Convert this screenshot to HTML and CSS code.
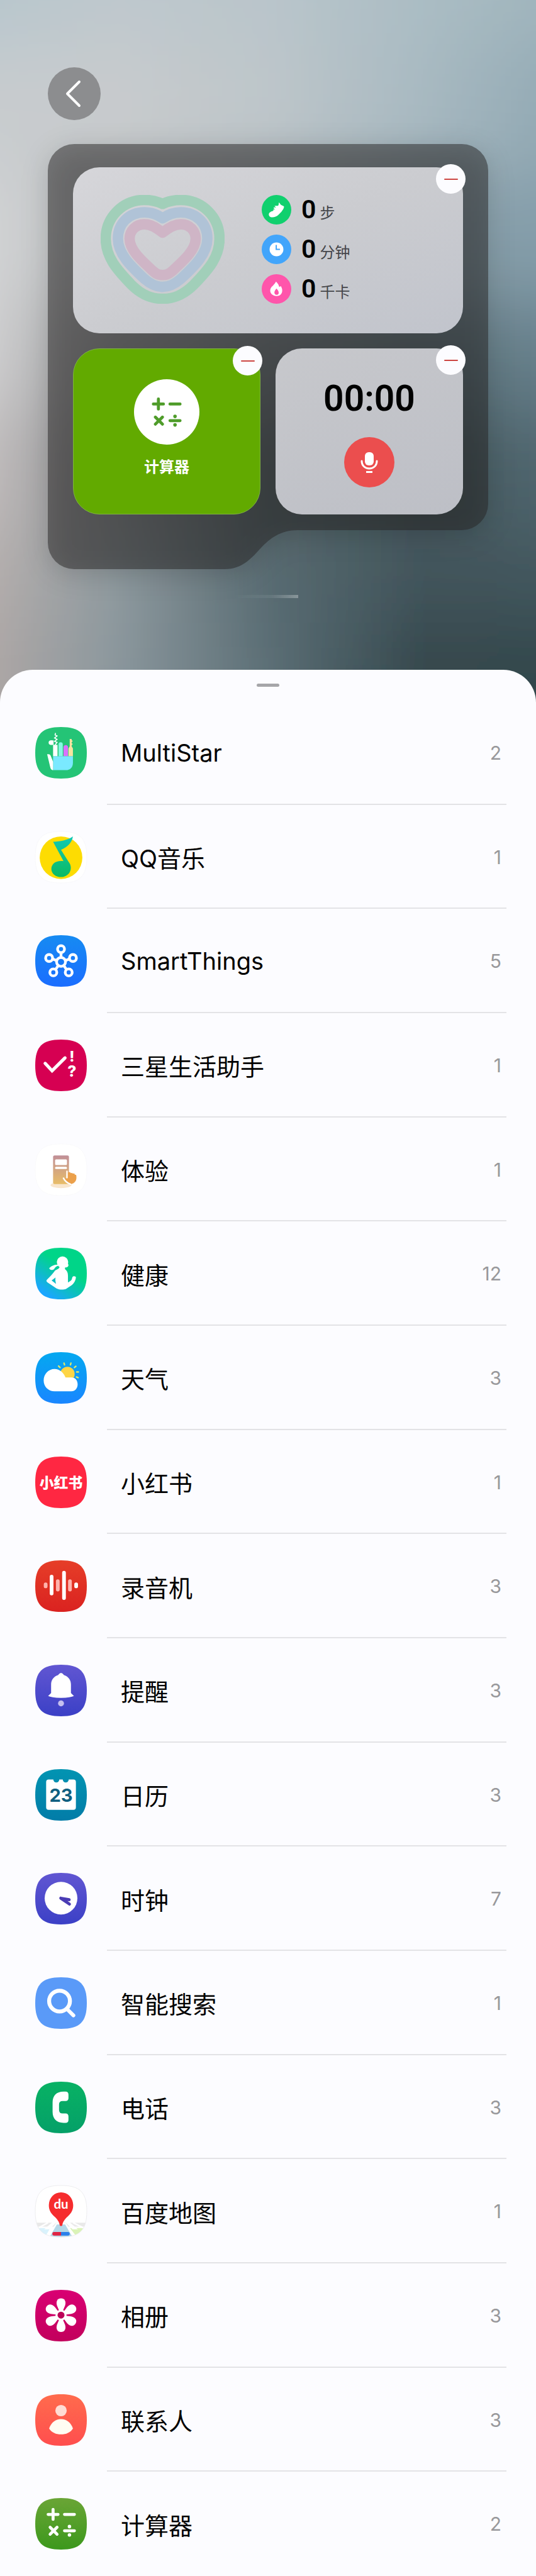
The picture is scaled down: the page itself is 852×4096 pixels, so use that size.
FILE: index.html
```html
<!DOCTYPE html>
<html lang="zh-CN">
<head>
<meta charset="utf-8">
<meta name="viewport" content="width=device-width, initial-scale=1">
<title>小组件</title>
<link rel="stylesheet" href="styles.css">
</head>
<body>
<svg class="defs" aria-hidden="true">
  <defs>
    <path id="tile" d="M52 0C90 0 104 14 104 52S90 104 52 104 0 90 0 52 14 0 52 0Z"/>
    <clipPath id="tile-clip"><use href="#tile"/></clipPath>
    <g id="calc-signs" fill="none" stroke-width="6" stroke-linecap="round">
      <path d="M26 33H46M36 23V43M59 33H79M30 59L44 73M44 59L30 73M59 66H79"/>
      <path d="M69 57.500V57.600M69 74.400V74.500" stroke-width="7"/>
    </g>
    <path id="petal" d="M52 51L44 32C41 23 45 17 52 17S63 23 60 32Z"/>
    <linearGradient id="g-blue" x2="0" y2="1"><stop stop-color="#168bf2"/><stop offset="1" stop-color="#1b6dff"/></linearGradient>
    <linearGradient id="g-note" x2="0" y2="1"><stop stop-color="#12c9b4"/><stop offset="1" stop-color="#0cba62"/></linearGradient>
    <linearGradient id="g-kiosk" x2="0" y2="1"><stop stop-color="#c08f98"/><stop offset="1" stop-color="#e8bd68"/></linearGradient>
    <linearGradient id="g-health" x1="0.2" y1="0.9" x2="0.7" y2="0.2"><stop stop-color="#1ba6ff"/><stop offset="0.75" stop-color="#00d588"/></linearGradient>
    <linearGradient id="g-sky" x2="0" y2="1"><stop stop-color="#04a8f0"/><stop offset="1" stop-color="#1a86ff"/></linearGradient>
    <linearGradient id="g-rec" x2="0" y2="1"><stop stop-color="#e63e28"/><stop offset="1" stop-color="#da2220"/></linearGradient>
    <linearGradient id="g-violet" x2="0" y2="1"><stop stop-color="#6156d2"/><stop offset="1" stop-color="#3b40c6"/></linearGradient>
    <linearGradient id="g-teal" x2="0" y2="1"><stop stop-color="#0294b2"/><stop offset="1" stop-color="#027ca8"/></linearGradient>
    <linearGradient id="g-phone" x2="0" y2="1"><stop stop-color="#08b264"/><stop offset="1" stop-color="#05a068"/></linearGradient>
    <linearGradient id="g-pink" x2="0" y2="1"><stop stop-color="#d90073"/><stop offset="1" stop-color="#c2005c"/></linearGradient>
    <linearGradient id="g-coral" x2="0" y2="1"><stop stop-color="#ff6b4d"/><stop offset="1" stop-color="#ff4e4e"/></linearGradient>
    <linearGradient id="g-green" x2="0" y2="1"><stop stop-color="#6aa536"/><stop offset="1" stop-color="#3c981c"/></linearGradient>
    <linearGradient id="w1"><stop stop-color="#b5c6cd"/><stop offset=".25" stop-color="#bec8cd"/><stop offset=".5" stop-color="#b9c5cb"/><stop offset=".75" stop-color="#abbdc4"/><stop offset="1" stop-color="#9fb4bc"/></linearGradient>
    <linearGradient id="w2"><stop stop-color="#c8cccf"/><stop offset=".25" stop-color="#c8cbcd"/><stop offset=".5" stop-color="#bec6ca"/><stop offset=".75" stop-color="#a8b9c1"/><stop offset="1" stop-color="#8fa7b2"/></linearGradient>
    <linearGradient id="w3"><stop stop-color="#d6d7d8"/><stop offset=".25" stop-color="#bcbfc1"/><stop offset=".5" stop-color="#a2abb0"/><stop offset=".75" stop-color="#8b9fa8"/><stop offset="1" stop-color="#819caa"/></linearGradient>
    <linearGradient id="w4"><stop stop-color="#dad9da"/><stop offset=".25" stop-color="#9b9d9f"/><stop offset=".5" stop-color="#747f84"/><stop offset=".75" stop-color="#5f737b"/><stop offset="1" stop-color="#68838f"/></linearGradient>
    <linearGradient id="w5"><stop stop-color="#cbc5c5"/><stop offset=".25" stop-color="#8c8f91"/><stop offset=".5" stop-color="#566467"/><stop offset=".75" stop-color="#46585c"/><stop offset="1" stop-color="#526973"/></linearGradient>
    <linearGradient id="w6"><stop stop-color="#bcb2af"/><stop offset=".25" stop-color="#8f9a9f"/><stop offset=".5" stop-color="#586b72"/><stop offset=".75" stop-color="#42555c"/><stop offset="1" stop-color="#42565d"/></linearGradient>
    <linearGradient id="w7"><stop stop-color="#b5aaa7"/><stop offset=".25" stop-color="#8b979d"/><stop offset=".5" stop-color="#5c6f76"/><stop offset=".75" stop-color="#34474c"/><stop offset="1" stop-color="#33454a"/></linearGradient>
    <filter id="melt" x="-20%" y="-20%" width="140%" height="140%"><feGaussianBlur stdDeviation="20 60"/></filter>
  </defs>
</svg>

<div class="screen">
  <svg class="wallpaper" viewBox="0 0 852 1120" preserveAspectRatio="none" aria-hidden="true">
    <g filter="url(#melt)">
      <rect x="-60" y="-150" width="972" height="220" fill="url(#w1)"/>
      <rect x="-60" y="70" width="972" height="210" fill="url(#w2)"/>
      <rect x="-60" y="280" width="972" height="200" fill="url(#w3)"/>
      <rect x="-60" y="480" width="972" height="170" fill="url(#w4)"/>
      <rect x="-60" y="650" width="972" height="190" fill="url(#w5)"/>
      <rect x="-60" y="840" width="972" height="150" fill="url(#w6)"/>
      <rect x="-60" y="990" width="972" height="280" fill="url(#w7)"/>
    </g>
  </svg>

  <header class="hero">
    <button class="back" type="button" aria-label="返回">
      <svg viewBox="0 0 84 84" aria-hidden="true"><path d="M50 23L31 42L50 61" fill="none" stroke="#fff" stroke-width="4" stroke-linecap="round" stroke-linejoin="round"/></svg>
    </button>

    <section class="panel" aria-label="已添加的小组件">
      <svg class="panel-shape" viewBox="0 0 700 675" preserveAspectRatio="none" aria-hidden="true">
        <path d="M42 0H658A42 42 0 0 1 700 42V571A42 42 0 0 1 658 613H397C370 613 353 626 339 641C325 656 310 675 281 675H42A42 42 0 0 1 0 633V42A42 42 0 0 1 42 0Z" fill="#262424" fill-opacity=".5"/>
      </svg>
      <div class="widgets">
        <article class="widget widget-health">
          <svg class="hearts" viewBox="0 0 249 219" fill="none" stroke-width="21" stroke-linejoin="round" aria-hidden="true">
            <path stroke="#a1cfb9" d="M124.500 18C112 12 100 10 88 10C44 10 10 45 10 88C10 125 32 150 62 181C84 203 104 209 124.500 209S165 203 187 181C217 150 239 125 239 88C239 45 205 10 161 10C149 10 137 12 124.500 18Z"/>
            <path stroke="#b0c3d7" d="M124.500 47C112 38 100 35 88 35C56 35 34.500 58 34.500 88C34.500 118 60 143 88 169C102 181 112 185 124.500 185S147 181 161 169C189 143 214.500 118 214.500 88C214.500 58 193 35 161 35C149 35 137 38 124.500 47Z"/>
            <path stroke="#cfb5c6" d="M124.500 76C108 62 98 59 88 59C70 59 58 72 58 88C58 110 80 130 105 153C114 161 119 161 124.500 161S135 161 144 153C169 130 191 110 191 88C191 72 179 59 161 59C151 59 141 62 124.500 76Z"/>
          </svg>
          <ul class="metrics">
            <li class="metric">
              <svg viewBox="0 0 60 60" aria-hidden="true"><circle cx="30" cy="30" r="30" fill="#10d06e"/><path d="M15 42C13 37 17 34 24 32L23 30L27 29L24 27L25 25L29 26L26 22H33C35 21 34 18 35 15L39 20L45 23C46 26 43 30 40 34C36 38 33 42 28 44C23 46 17 46 15 42Z" fill="#fff"/></svg>
              <strong>0</strong><span>步</span>
            </li>
            <li class="metric">
              <svg viewBox="0 0 60 60" aria-hidden="true"><circle cx="30" cy="30" r="30" fill="#42a5fb"/><circle cx="30" cy="30" r="14" fill="#fff"/><path d="M29.500 21V30H37" fill="none" stroke="#42a5fb" stroke-width="2.500"/></svg>
              <strong>0</strong><span>分钟</span>
            </li>
            <li class="metric">
              <svg viewBox="0 0 60 60" aria-hidden="true"><circle cx="30" cy="30" r="30" fill="#ff55ab"/><path d="M29 15C33 19 35 22 35 25C37 26 38 25 38.500 24C44 31 43 44 30 44.500C18 44 14 33 20 26C24 22 27 19 29 15ZM30 29C27 33 25 35 26 39C27.500 43 33.500 43 34.500 38.500C35 35 32.500 32 30 29Z" fill="#fff" fill-rule="evenodd"/></svg>
              <strong>0</strong><span>千卡</span>
            </li>
          </ul>
          <button class="remove" type="button" aria-label="移除健康"></button>
        </article>
        <article class="widget widget-calc">
          <svg class="calc-icon" viewBox="0 0 104 104" aria-hidden="true"><circle cx="52" cy="52" r="52" fill="#fff"/><g transform="translate(10 13)"><g transform="scale(.8)"><use href="#calc-signs" stroke="#4f9c2a"/></g></g></svg>
          <p class="calc-name">计算器</p>
          <button class="remove" type="button" aria-label="移除计算器"></button>
        </article>
        <article class="widget widget-recorder">
          <time class="timer">00:00</time>
          <button class="record" type="button" aria-label="录音">
            <svg viewBox="0 0 80 80" aria-hidden="true"><rect x="33" y="24" width="14" height="21" rx="6" fill="#fff"/><path d="M28 38C28 54 52 54 52 38" fill="none" stroke="#fff" stroke-width="3" stroke-linecap="round"/><path d="M35 55.500H45" stroke="#fff" stroke-width="3"/></svg>
          </button>
          <button class="remove" type="button" aria-label="移除录音机"></button>
        </article>
      </div>
    </section>
    <div class="page-mark"></div>
  </header>

  <main class="sheet">
    <div class="handle"></div>
    <ul class="apps">
      <li><button class="app" type="button">
        <svg viewBox="0 0 104 104" aria-hidden="true"><use href="#tile" fill="#24c476"/><path d="M36 59V36H45V59Z" fill="#fff"/><path d="M47 59V35A4 4 0 0 1 55.500 35V59Z" fill="#85fbe2"/><path d="M57 59V41A4.500 4.500 0 0 1 66 41V59Z" fill="#da72fb"/><path d="M67 59V43L69.500 39V24H73.500V27H75V30H73.500V33H75V36H73.500V39L76 43V59Z" fill="#f6e4a0"/><path d="M36 59H76V72C76 82 70 87 62 87H36Z" fill="#7ae9ff"/><path d="M24 55C29 54 31 56 32 60L36 70V87C32 87 31 84 30 80Z" fill="#fff"/><circle cx="31.500" cy="31.500" r="4.500" fill="#fff"/><path d="M31 27H37V36H31Z" fill="#fff"/><path d="M41 12L40 16L44 18L39 22L44 25L39 29L44 31L40 36" fill="none" stroke="#fff" stroke-width="2"/></svg>
        <span class="app-body"><span class="app-name">MultiStar</span><span class="app-count">2</span></span>
      </button></li>
      <li><button class="app" type="button">
        <svg viewBox="0 0 104 104" aria-hidden="true"><use href="#tile" fill="#fff" stroke="#f6f6f8"/><circle cx="52" cy="53" r="43" fill="#fddc02"/><path d="M36 21C50 20 64 18 76 10C74 23 65 31 52 37L67 61C73 68 73 77 69 83C65 89 59 92 52 92C42 92 33 86 32.500 76C32.500 65 42 58 57 60Z" fill="url(#g-note)"/></svg>
        <span class="app-body"><span class="app-name">QQ音乐</span><span class="app-count">1</span></span>
      </button></li>
      <li><button class="app" type="button">
        <svg viewBox="0 0 104 104" aria-hidden="true"><use href="#tile" fill="url(#g-blue)"/><g fill="none" stroke="#fff" stroke-width="5.500"><circle cx="52" cy="54" r="9"/><circle cx="52" cy="28" r="7"/><circle cx="28" cy="46" r="7"/><circle cx="76" cy="46" r="7"/><circle cx="36.500" cy="75" r="7"/><circle cx="67.500" cy="75" r="7"/><path d="M52 35V45M35 48L43 51M69 48L61 51M41 69L46 62M63 69L58 62"/></g></svg>
        <span class="app-body"><span class="app-name">SmartThings</span><span class="app-count">5</span></span>
      </button></li>
      <li><button class="app" type="button">
        <svg viewBox="0 0 104 104" aria-hidden="true"><use href="#tile" fill="#d60052"/><path d="M20 48L34 63L60 37" fill="none" stroke="#fff" stroke-width="6.500" stroke-linecap="round"/><text class="tile-mark" x="74" y="44" font-size="29">!</text><text class="tile-mark" x="74" y="75" font-size="31">?</text></svg>
        <span class="app-body"><span class="app-name">三星生活助手</span><span class="app-count">1</span></span>
      </button></li>
      <li><button class="app" type="button">
        <svg viewBox="0 0 104 104" aria-hidden="true"><use href="#tile" fill="#fff" stroke="#f8f8fa"/><ellipse cx="52" cy="83" rx="21" ry="6" fill="#f9e6cd"/><rect x="36" y="23" width="32" height="58" rx="3" fill="url(#g-kiosk)"/><rect x="40" y="31" width="24" height="11.500" rx="2" fill="#fff"/><rect x="40" y="46" width="24" height="4.500" rx="2" fill="#fff"/><path d="M62 55Q64 52 66 55V58Q70 55 72 59Q74 57 76 60Q79 58 80 62Q83 61 83 66C84 76 77 81 70 81C64 81 59 75 56 70Q60 68 63 70Z" fill="#eba04b"/><path d="M64 55V68M57 69C60 75 65 79 71 81" fill="none" stroke="#fff" stroke-width="3" stroke-linecap="round"/></svg>
        <span class="app-body"><span class="app-name">体验</span><span class="app-count">1</span></span>
      </button></li>
      <li><button class="app" type="button">
        <svg viewBox="0 0 104 104" aria-hidden="true"><use href="#tile" fill="url(#g-health)"/><path d="M46 34C36 34 32 38 28 41.500C30 45 35 46 38 43C40 39 43 37 47 36Z" fill="#fff"/><circle cx="55" cy="29" r="11.500" fill="#fff"/><path d="M64 25L67 35C67 38 65 40 60 40V43C64 46 66 50 66 56V70L71 67C74 65 74 62 75 59Q78 56 82 59C82 65 79 71 74 75L62 83C57 85 49 85 43 82L25 70C22 68 22 66 24 64C30 58 35 53 40 46C44 43 49 43 49 38ZM41 60L33 66L42 73C41 69 40 65 41 60Z" fill="#fff" fill-rule="evenodd"/></svg>
        <span class="app-body"><span class="app-name">健康</span><span class="app-count">12</span></span>
      </button></li>
      <li><button class="app" type="button">
        <svg viewBox="0 0 104 104" aria-hidden="true"><use href="#tile" fill="url(#g-sky)"/><circle cx="65" cy="44" r="14.500" fill="#fdd546"/><path d="M50 31L47 28M59 25.500L58 22M71 25.500L72 22M79 31L82 28.500M83.500 40H87M83 50L86.500 51.500" stroke="#d8e86e" stroke-width="3" stroke-linecap="round"/><path d="M39 79C26 79 17 69 17 57C17 44 27 34 39 34C49 34 57 41 61 51H73C81 51 85.500 57 85.500 65S80 79 73 79Z" fill="#fff"/></svg>
        <span class="app-body"><span class="app-name">天气</span><span class="app-count">3</span></span>
      </button></li>
      <li><button class="app" type="button">
        <svg viewBox="0 0 104 104" aria-hidden="true"><use href="#tile" fill="#ff2742"/><text class="tile-cjk" x="52" y="63" font-size="29">小红书</text></svg>
        <span class="app-body"><span class="app-name">小红书</span><span class="app-count">1</span></span>
      </button></li>
      <li><button class="app" type="button">
        <svg viewBox="0 0 104 104" aria-hidden="true"><use href="#tile" fill="url(#g-rec)"/><g stroke-width="7.500" stroke-linecap="round"><path d="M33 33V67M58 25V76M82.500 48.500V52.500" stroke="#fff"/><path d="M21 48.500V52.500M45.500 42V59M70 42V59" stroke="#ffb3ad"/></g></svg>
        <span class="app-body"><span class="app-name">录音机</span><span class="app-count">3</span></span>
      </button></li>
      <li><button class="app" type="button">
        <svg viewBox="0 0 104 104" aria-hidden="true"><use href="#tile" fill="url(#g-violet)"/><path d="M46 21Q52 12 58 21C67 24 72 31 72 40V57L78 63Q72 66 52 67Q32 66 26 63L32 57V40C32 31 37 24 46 21Z" fill="#fff"/><circle cx="52" cy="78" r="6" fill="#c5c0ef"/></svg>
        <span class="app-body"><span class="app-name">提醒</span><span class="app-count">3</span></span>
      </button></li>
      <li><button class="app" type="button">
        <svg viewBox="0 0 104 104" aria-hidden="true"><use href="#tile" fill="url(#g-teal)"/><path d="M27 21H36.500A6 6 0 0 0 48.500 21H55.500A6 6 0 0 0 67.500 21H77A5 5 0 0 1 82 26V77A5 5 0 0 1 77 82H27A5 5 0 0 1 22 77V26A5 5 0 0 1 27 21Z" fill="#fff"/><text class="tile-date" x="52" y="66" font-size="37">23</text></svg>
        <span class="app-body"><span class="app-name">日历</span><span class="app-count">3</span></span>
      </button></li>
      <li><button class="app" type="button">
        <svg viewBox="0 0 104 104" aria-hidden="true"><use href="#tile" fill="url(#g-violet)"/><circle cx="52" cy="51" r="33" fill="#fff"/><path d="M51.500 51L68.500 54M51.500 51L69 63" stroke="#4a3cb4" stroke-width="6" stroke-linecap="round"/></svg>
        <span class="app-body"><span class="app-name">时钟</span><span class="app-count">7</span></span>
      </button></li>
      <li><button class="app" type="button">
        <svg viewBox="0 0 104 104" aria-hidden="true"><use href="#tile" fill="#5a9af8"/><circle cx="49" cy="48" r="21" fill="none" stroke="#fff" stroke-width="8"/><path d="M65 65L77 77" stroke="#fff" stroke-width="7.500" stroke-linecap="round"/></svg>
        <span class="app-body"><span class="app-name">智能搜索</span><span class="app-count">1</span></span>
      </button></li>
      <li><button class="app" type="button">
        <svg viewBox="0 0 104 104" aria-hidden="true"><use href="#tile" fill="url(#g-phone)"/><path d="M35 42C35 28 43 20 57 20H61Q67 20 67 26V33Q67 39 61 39H55Q48 39 48 46V57Q48 64 55 64H61Q67 64 67 70V77Q67 83 61 83H57C43 83 35 75 35 61Z" fill="#fff"/></svg>
        <span class="app-body"><span class="app-name">电话</span><span class="app-count">3</span></span>
      </button></li>
      <li><button class="app" type="button">
        <svg viewBox="0 0 104 104" aria-hidden="true"><use href="#tile" fill="#fff"/><g clip-path="url(#tile-clip)"><path d="M0 75H104V83H0Z" fill="#e9e9e9"/><path d="M0 86H30L20 104H0Z" fill="#d9f2fc"/><path d="M70 86H104V104H84Z" fill="#daf3b8"/><path d="M36 75H40L28 87H22ZM64 75H68L82 87H76ZM26 75L4 87M76 75L100 87" fill="#fff" stroke="#fff" stroke-width="3"/><path d="M43 77H61L78 106H26Z" fill="#b4d8e8" stroke="#fff" stroke-width="3"/><path d="M38 94H52V101H38A3 3 0 0 1 38 94Z" fill="#e02444"/><path d="M52 94H66A3 3 0 0 1 66 101H52Z" fill="#2b80ea"/></g><use href="#tile" fill="none" stroke="#e8e8ea"/><path d="M49.500 81C49 74 44 67 38 62C31 56 27 48 27.500 39C28 25 38 14 52 14S76 25 76.500 39C77 48 73 56 66 62C60 67 55 74 54.500 81Q52 83 49.500 81Z" fill="#f62c2e"/><text class="tile-du" x="52" y="47" font-size="26">du</text></svg>
        <span class="app-body"><span class="app-name">百度地图</span><span class="app-count">1</span></span>
      </button></li>
      <li><button class="app" type="button">
        <svg viewBox="0 0 104 104" aria-hidden="true"><use href="#tile" fill="url(#g-pink)"/><g fill="#fff"><use href="#petal"/><use href="#petal" transform="rotate(60 52 51)"/><use href="#petal" transform="rotate(120 52 51)"/><use href="#petal" transform="rotate(180 52 51)"/><use href="#petal" transform="rotate(240 52 51)"/><use href="#petal" transform="rotate(300 52 51)"/><circle cx="52" cy="51" r="11"/></g><circle cx="52" cy="51" r="7" fill="#bc0058"/></svg>
        <span class="app-body"><span class="app-name">相册</span><span class="app-count">3</span></span>
      </button></li>
      <li><button class="app" type="button">
        <svg viewBox="0 0 104 104" aria-hidden="true"><use href="#tile" fill="url(#g-coral)"/><circle cx="52" cy="33" r="11.500" fill="#ffdcd4"/><path d="M28 69C32 57 41 50 52 50S72 57 76 69C71 77 62 81 52 81S33 77 28 69Z" fill="#fffdf2"/></svg>
        <span class="app-body"><span class="app-name">联系人</span><span class="app-count">3</span></span>
      </button></li>
      <li><button class="app" type="button">
        <svg viewBox="0 0 104 104" aria-hidden="true"><use href="#tile" fill="url(#g-green)"/><use href="#calc-signs" stroke="#fff"/></svg>
        <span class="app-body"><span class="app-name">计算器</span><span class="app-count">2</span></span>
      </button></li>
    </ul>
  </main>
</div>
</body>
</html>
```
FILE: styles.css
```css
* {
  box-sizing: border-box;
}

body {
  margin: 0;
  font-family: Inter, "Noto Sans CJK SC", sans-serif;
  color: #000;
  background: #fcfcff;
}

button {
  padding: 0;
  border: 0;
  font: inherit;
  color: inherit;
  background: none;
  cursor: pointer;
}

ul {
  margin: 0;
  padding: 0;
  list-style: none;
}

svg {
  display: block;
}

.defs {
  position: absolute;
  width: 0;
  height: 0;
}

.screen {
  position: relative;
  display: flex;
  flex-direction: column;
  min-height: 100vh;
  overflow: hidden;
}

.wallpaper {
  position: absolute;
  top: 0;
  left: 0;
  width: 100%;
  height: 1120px;
}

.hero {
  position: relative;
  padding: 107px 76px 114px;
}

.back {
  display: block;
  width: 84px;
  height: 84px;
  border-radius: 50%;
  background: #8c8d8f;
}

.panel {
  position: relative;
  margin-top: 38px;
  padding: 37px 40px 87px;
}

.panel-shape {
  position: absolute;
  inset: 0;
  width: 100%;
  height: 100%;
  overflow: visible;
  filter: drop-shadow(0 8px 20px rgba(0, 0, 0, 0.3));
}

.widgets {
  position: relative;
  display: grid;
  grid-template-columns: 1fr 1fr;
  gap: 24px;
}

.widget {
  position: relative;
  height: 264px;
  border-radius: 42px;
}

.widget-health {
  grid-column: 1 / -1;
  display: flex;
  align-items: center;
  gap: 59px;
  padding: 0 0 3px 44px;
  background: linear-gradient(155deg, #d6d6da, #cbccd0 50%, #c1c4cc);
}

.hearts {
  width: 197px;
  height: 173px;
}

.metrics {
  display: flex;
  flex-direction: column;
  gap: 16px;
}

.metric {
  display: flex;
  align-items: baseline;
  height: 47px;
  line-height: 47px;
}

.metric svg {
  width: 47px;
  height: 47px;
  margin-right: 16px;
  align-self: center;
}

.metric strong {
  font-family: Roboto, sans-serif;
  font-size: 41px;
  font-weight: 600;
}

.metric span {
  margin-left: 6px;
  font-size: 24px;
  color: #45464a;
}

.widget-calc,
.widget-recorder {
  display: flex;
  flex-direction: column;
  align-items: center;
}

.widget-calc {
  padding-top: 48px;
  border: 1px solid #7fb342;
  background: #62aa00;
}

.calc-icon {
  width: 104px;
  height: 104px;
}

.calc-name {
  margin: 18px 0 0;
  font-size: 24px;
  line-height: 36px;
  font-weight: 700;
  color: #fff;
}

.widget-recorder {
  padding-top: 48px;
  background: linear-gradient(155deg, #c7c8cc, #bdbfc6);
}

.timer {
  font-family: Roboto, sans-serif;
  font-size: 57px;
  line-height: 64px;
  font-weight: 600;
}

.record {
  width: 80px;
  height: 80px;
  margin-top: 29px;
  border-radius: 50%;
  background: #eb4e4e;
}

.remove {
  position: absolute;
  top: -5px;
  right: -4px;
  display: grid;
  place-items: center;
  width: 47px;
  height: 47px;
  border-radius: 50%;
  background: #fcfcff;
}

.remove::before {
  content: "";
  width: 22px;
  height: 2px;
  border-radius: 1px;
  background: #cc4541;
}

.page-mark {
  width: 104px;
  height: 5px;
  margin: 41px 0 0 294px;
  background: linear-gradient(90deg, transparent, rgba(255, 255, 255, 0.08) 60%, rgba(255, 255, 255, 0.3));
}

.sheet {
  position: relative;
  flex: 1;
  display: flex;
  flex-direction: column;
  border-radius: 52px 52px 0 0;
  background: #fcfcff;
}

.handle {
  width: 36px;
  height: 5px;
  margin: 22px auto;
  border-radius: 3px;
  background: #a6a6a9;
}

.apps {
  flex: 1;
  display: flex;
  flex-direction: column;
}

.apps li {
  flex: 1;
  display: flex;
  min-height: 120px;
}

.app {
  flex: 1;
  display: flex;
  align-items: center;
  gap: 32px;
  padding: 0 47px 0 56px;
  text-align: left;
}

.app > svg {
  flex: none;
  width: 82px;
  height: 82px;
  overflow: visible;
}

.app-body {
  flex: 1;
  align-self: stretch;
  display: flex;
  align-items: center;
  justify-content: space-between;
  padding: 2px 8px 0 22px;
  border-bottom: 2px solid #e3e3e6;
}

.apps li:last-child .app-body {
  border-bottom-color: transparent;
}

.app-name {
  font-size: 38px;
}

.app-count {
  font-size: 30px;
  color: #98989b;
}

.tile-mark,
.tile-cjk,
.tile-date,
.tile-du {
  text-anchor: middle;
  fill: #fff;
}

.tile-mark {
  font-family: Inter, sans-serif;
  font-weight: 800;
}

.tile-cjk {
  font-family: "Noto Sans CJK SC", sans-serif;
  font-weight: 900;
}

.tile-date {
  font-family: Inter, sans-serif;
  font-weight: 700;
  fill: #0f5f80;
}

.tile-du {
  font-family: Lato, sans-serif;
  font-weight: 700;
}
```
